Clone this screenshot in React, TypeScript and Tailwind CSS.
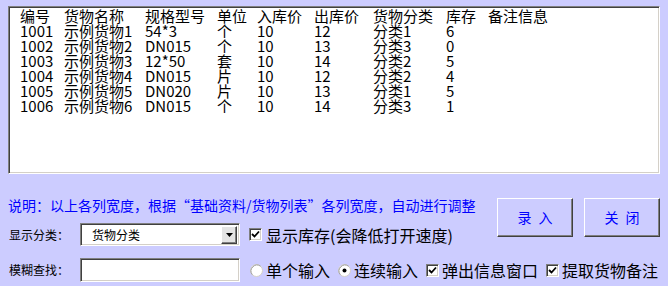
import React from "react";

const COLS = ["编号", "货物名称", "规格型号", "单位", "入库价", "出库价", "货物分类", "库存", "备注信息"];

const ROWS = [
  ["1001", "示例货物1", "54*3", "个", "10", "12", "分类1", "6", ""],
  ["1002", "示例货物2", "DN015", "个", "10", "13", "分类3", "0", ""],
  ["1003", "示例货物3", "12*50", "套", "10", "14", "分类2", "5", ""],
  ["1004", "示例货物4", "DN015", "片", "10", "12", "分类2", "4", ""],
  ["1005", "示例货物5", "DN020", "片", "10", "13", "分类1", "5", ""],
  ["1006", "示例货物6", "DN015", "个", "10", "14", "分类3", "1", ""],
];

const gridCols = "grid grid-cols-[44px_81px_72px_40px_57px_59px_73px_42px_1fr]";

// sunken win32 style frame
const sunken =
  "border border-t-[#808080] border-l-[#808080] border-r-white border-b-white shadow-[inset_1px_1px_0_#404040,inset_-1px_-1px_0_#d4d0c8]";

const Check = ({ checked }: { checked: boolean }) => (
  <span className={`w-[13px] h-[13px] bg-white flex items-center justify-center shrink-0 ${sunken}`}>
    {checked && (
      <svg width="9" height="9" viewBox="0 0 9 9">
        <polyline points="1,4 3.5,6.5 8,1.5" fill="none" stroke="#000" strokeWidth="1.8" />
      </svg>
    )}
  </span>
);

const Radio = ({ checked }: { checked: boolean }) => (
  <svg width="13" height="13" viewBox="0 0 13 13" className="shrink-0">
    <circle cx="6.5" cy="6.5" r="6" fill="#fff" stroke="#d4d0c8" strokeWidth="1" />
    <path d="M2.3 10.7 A6 6 0 0 1 10.7 2.3" fill="none" stroke="#a0a0a0" strokeWidth="1" />
    {checked && <circle cx="6.5" cy="6.5" r="2" fill="#000" />}
  </svg>
);

const RaisedButton = ({ label }: { label: string }) => (
  <button className="w-[76px] h-[39px] bg-[#ccccff] border border-t-white border-l-white border-r-[#404040] border-b-[#404040] shadow-[inset_-1px_-1px_0_#808080] text-[14px] text-[#0000ff] tracking-[7px] pl-[7px]">
    {label}
  </button>
);

export default function App() {
  return (
    <div className="w-[668px] h-[286px] bg-[#ccccff] pl-[8px] pt-[6px] font-['Noto_Sans_CJK_SC',sans-serif] text-black overflow-hidden">
      <div className={`w-[652px] h-[168px] bg-white ${sunken} pl-[11px] pt-[1px] text-[15px] leading-[15px]`}>
        <div className={gridCols}>
          {COLS.map((c) => (
            <span key={c} className="whitespace-nowrap">{c}</span>
          ))}
        </div>
        {ROWS.map((r) => (
          <div key={r[0]} className={gridCols}>
            {r.map((v, i) => (
              <span key={i} className="whitespace-nowrap">{v}</span>
            ))}
          </div>
        ))}
      </div>

      <div className="flex mt-[23px]">
        <div className="w-[489px]">
          <div className="h-[16px] leading-[16px] text-[14px] text-[#0000ff] whitespace-nowrap">
            说明：以上各列宽度，根据“基础资料/货物列表”各列宽度，自动进行调整
          </div>
          <div className="flex items-center mt-[10px] h-[23px]">
            <span className="w-[72px] pl-[1px] text-[12px] whitespace-nowrap">显示分类：</span>
            <div className={`w-[160px] h-[23px] bg-white flex items-center ${sunken}`}>
              <span className="flex-1 pl-[11px] text-[12px]">货物分类</span>
              <div className="w-[16px] h-[18px] mr-[2px] bg-[#e4e4e4] border border-t-white border-l-white border-r-[#404040] border-b-[#404040] shadow-[inset_-1px_-1px_0_#808080] flex items-center justify-center">
                <svg width="7" height="4" viewBox="0 0 7 4">
                  <polygon points="0,0 7,0 3.5,4" fill="#000" />
                </svg>
              </div>
            </div>
            <span className="ml-[9px]">
              <Check checked />
            </span>
            <span className="ml-[4px] text-[16px] whitespace-nowrap">显示库存(会降低打开速度)</span>
          </div>
        </div>
        <div className="flex gap-[11px] pt-[1px]">
          <RaisedButton label="录入" />
          <RaisedButton label="关闭" />
        </div>
      </div>

      <div className="flex items-center mt-[12px] h-[24px] text-[16px] whitespace-nowrap">
        <span className="w-[72px] pl-[1px] text-[12px]">模糊查找：</span>
        <div className={`w-[160px] h-[24px] bg-white ${sunken}`} />
        <span className="ml-[10px]">
          <Radio checked={false} />
        </span>
        <span className="ml-[3px]">单个输入</span>
        <span className="ml-[8px]">
          <Radio checked />
        </span>
        <span className="ml-[3px]">连续输入</span>
        <span className="ml-[8px]">
          <Check checked />
        </span>
        <span className="ml-[3px]">弹出信息窗口</span>
        <span className="ml-[8px]">
          <Check checked />
        </span>
        <span className="ml-[3px]">提取货物备注</span>
      </div>
    </div>
  );
}
